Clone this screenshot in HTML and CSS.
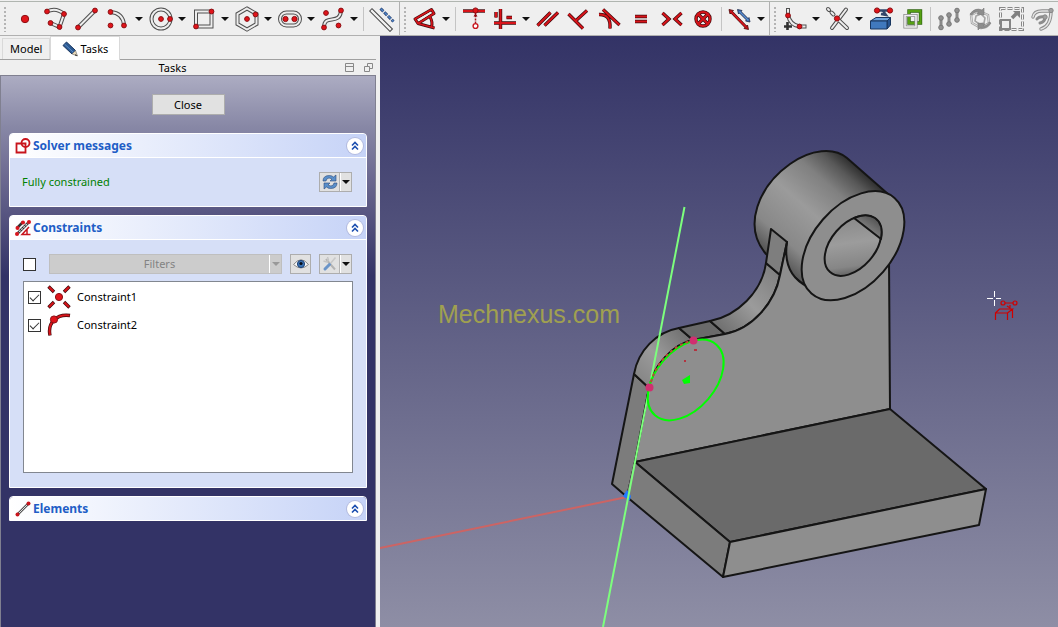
FILE: index.html
```html
<!DOCTYPE html>
<html lang="en">
<head>
<meta charset="utf-8">
<meta name="viewport" content="width=device-width, initial-scale=1">
<title>Sketcher</title>
<link rel="stylesheet" href="styles.css">
</head>
<body>
<div class="app">
  <header class="toolbars">
    <div class="toolbar" role="toolbar" aria-label="Sketcher geometries">
      <span class="grip"></span>
      <button class="tool" aria-label="Point"><svg viewBox="-13 -13 26 26"><circle class="dot" r="3.7"/></svg></button>
      <button class="tool" aria-label="Polyline"><svg viewBox="-13 -13 26 26"><path class="k" d="M-9-7.500Q0-12 8-5L3.500 8L-5.500 4"/><path class="w" d="M-9-7.500Q0-12 8-5L3.500 8L-5.500 4"/><circle class="dot" cx="-9" cy="-7.500" r="2.400"/><circle class="dot" cx="8" cy="-5" r="2.400"/><circle class="dot" cx="3.500" cy="8" r="2.400"/><circle class="dot" cx="-5.500" cy="4" r="2.400"/></svg></button>
      <button class="tool" aria-label="Line"><svg viewBox="-13 -13 26 26"><path class="k" d="M-9 8.500L8-8.500"/><path class="w" d="M-9 8.500L8-8.500"/><circle class="dot" cx="-9" cy="8.500" r="2.400"/><circle class="dot" cx="8" cy="-8.500" r="2.400"/></svg></button>
      <button class="tool" aria-label="Arc"><svg viewBox="-13 -13 26 26"><path class="k" d="M-7.500-7Q5-6 6 6"/><path class="w" d="M-7.500-7Q5-6 6 6"/><circle class="dot" cx="-7.500" cy="-7" r="2.400"/><circle class="dot" cx="6" cy="6.500" r="2.400"/><circle class="dot" cx="-7.500" cy="6.500" r="2.400"/></svg></button>
      <button class="drop" aria-label="More arcs"></button>
      <button class="tool" aria-label="Circle"><svg viewBox="-13 -13 26 26"><circle class="k" cx="0" r="9.500"/><circle class="w" cx="0" r="9.500"/><circle class="dot" cx="0" r="2.400"/><circle class="dot" cx="9" r="2.400"/></svg></button>
      <button class="drop" aria-label="More circles"></button>
      <button class="tool" aria-label="Rectangle"><svg viewBox="-13 -13 26 26"><path class="k" d="M-8-7.500H7.500V7.500H-8z"/><path class="w" d="M-8-7.500H7.500V7.500H-8z"/><circle class="dot" cx="7.500" cy="-7.500" r="2.400"/><circle class="dot" cx="-8" cy="7.500" r="2.400"/></svg></button>
      <button class="drop" aria-label="More rectangles"></button>
      <button class="tool" aria-label="Polygon"><svg viewBox="-13 -13 26 26"><path class="k" d="M0-10.500L9.500-5V5L0 10.500L-9.500 5V-5z"/><path class="w" d="M0-10.500L9.500-5V5L0 10.500L-9.500 5V-5z"/><circle class="dot" r="2.400"/><circle class="dot" cx="8.500" cy="-4.500" r="2.400"/></svg></button>
      <button class="drop" aria-label="More polygons"></button>
      <button class="tool" aria-label="Slot"><svg viewBox="-13 -13 26 26"><rect class="k" x="-10" y="-6.500" width="20" height="13" rx="6.500"/><rect class="w" x="-10" y="-6.500" width="20" height="13" rx="6.500"/><circle class="dot" cx="-4.500" r="2.600"/><circle class="dot" cx="4.500" r="2.600"/></svg></button>
      <button class="drop" aria-label="More slots"></button>
      <button class="tool" aria-label="B-spline"><svg viewBox="-13 -13 26 26"><path class="k" d="M-9 8.500C-9-6 7 7 8-8.500"/><path class="w" d="M-9 8.500C-9-6 7 7 8-8.500"/><circle class="dot" cx="-7" cy="-6" r="2.400"/><circle class="dot" cx="8" cy="-8.500" r="2.400"/><circle class="dot" cx="-9" cy="8.500" r="2.400"/><circle class="dot" cx="5.500" cy="6.500" r="2.400"/></svg></button>
      <button class="drop" aria-label="More curves"></button>
      <span class="sep"></span>
      <button class="tool" aria-label="Construction geometry"><svg viewBox="-13 -13 26 26"><path d="M-10-8L8 10" stroke="#444" stroke-width="4.400" stroke-linecap="square"/><path d="M-10-8L8 10" stroke="#f0f0f0" stroke-width="2.400" stroke-linecap="square"/><path d="M-1.500-10.500L11.500 2.500" fill="none" stroke="#26406e" stroke-width="3" stroke-dasharray="4 1.300"/><path d="M-1.200-10.200L11.500 2.500" fill="none" stroke="#5287cb" stroke-width="1.500" stroke-dasharray="3.500 1.800"/></svg></button>
    </div>
    <div class="toolbar" role="toolbar" aria-label="Sketcher constraints">
      <span class="grip"></span>
      <button class="tool" aria-label="Dimension angle"><svg viewBox="-13 -13 26 26"><g stroke-linejoin="round"><path d="M-10 0L6.500-9.500L9-5.500L-7 4.500zM-7 4.500L9.500 9M5-2Q8 3 6.500 8" fill="none" stroke="#3f0a0c" stroke-width="3"/><path d="M-10 0L6.500-9.500L9-5.500L-7 4.500zM-7 4.500L9.500 9M5-2Q8 3 6.500 8" fill="none" stroke="#d8141a" stroke-width="1.600"/><path d="M-7.500 0.500L5.500-7L6.500-6L-6 2z" fill="#efefef"/></g></svg></button>
      <button class="drop" aria-label="More dimensions"></button>
      <span class="sep"></span>
      <button class="tool" aria-label="Point on object"><svg viewBox="-13 -13 26 26"><path class="d" d="M-11-8H11"/><path class="r" d="M-11-8H11"/><path d="M1.500-7V5" fill="none" stroke="#a01018" stroke-width="1.500" stroke-dasharray="2 1.200"/><path d="M-.5-2.500h4L1.500-6z" fill="#900c14"/><circle class="dot" cx="1.500" cy="-8.500" r="2.600"/><circle cx="1.500" cy="7" r="2.400" fill="#fff" stroke="#c8141c" stroke-width="1.400"/></svg></button>
      <button class="tool" aria-label="Horizontal or vertical"><svg viewBox="-13 -13 26 26"><path class="d" d="M-4.500-10V10M-11 4H11M-9-7V-1.500M1.500-1.500H7"/><path class="r" d="M-4.500-10V10M-11 4H11M-9-7V-1.500M1.500-1.500H7"/></svg></button>
      <button class="drop" aria-label="More alignment constraints"></button>
      <button class="tool" aria-label="Parallel"><svg viewBox="-13 -13 26 26"><path class="d" d="M-10.500 6.500L2.500-6.500M-3.500 6.500L10-6.500"/><path class="r" d="M-10.500 6.500L2.500-6.500M-3.500 6.500L10-6.500"/></svg></button>
      <button class="tool" aria-label="Perpendicular"><svg viewBox="-13 -13 26 26"><path class="d" d="M-10.500-5L4 9.500M-3.500 2L8-8.500"/><path class="r" d="M-10.500-5L4 9.500M-3.500 2L8-8.500"/></svg></button>
      <button class="tool" aria-label="Tangent"><svg viewBox="-13 -13 26 26"><path class="d" d="M-7-9.500L9.500 6M-11-4.500Q1-5 0 9.500"/><path class="r" d="M-7-9.500L9.500 6M-11-4.500Q1-5 0 9.500"/></svg></button>
      <button class="tool" aria-label="Equal"><svg viewBox="-13 -13 26 26"><path class="d" d="M-6-2.500H6M-6 2.500H6"/><path class="r" d="M-6-2.500H6M-6 2.500H6"/></svg></button>
      <button class="tool" aria-label="Symmetric"><svg viewBox="-13 -13 26 26"><path class="d" d="M-9.500-6L-3 0L-9.500 6M9.500-6L3 0L9.500 6"/><path class="r" d="M-9.500-6L-3 0L-9.500 6M9.500-6L3 0L9.500 6"/></svg></button>
      <button class="tool" aria-label="Block"><svg viewBox="-13 -13 26 26"><path class="d" d="M-4.500-4.500L4.500 4.500M4.500-4.500L-4.500 4.500"/><circle class="d" r="7"/><circle class="r" r="7"/><path class="r" d="M-4.500-4.500L4.500 4.500M4.500-4.500L-4.500 4.500"/></svg></button>
      <span class="sep"></span>
      <button class="tool" aria-label="Toggle driving constraint"><svg viewBox="-13 -13 26 26"><path d="M-9-7.500L6.500 8.500" stroke="#3a0808" stroke-width="3"/><path d="M-11-9.500l4.500 1-3.500 3.500zM8.500 10.500l-4.500-1 3.500-3.500z" fill="#c8141c" stroke="#4a0808" stroke-width=".8"/><path d="M-8.500-7L6 8" stroke="#d2161e" stroke-width="1.800"/><path d="M-.5-7.500L8 1" stroke="#1c2b4d" stroke-width="2.800"/><path d="M-2.500-9.500l4.500 1-3.500 3.500zM10 3l-4.500-1L9-1.500z" fill="#3d6eb4" stroke="#1c2b4d" stroke-width=".8"/><path d="M-.5-7.500L8 1" stroke="#5a8fd4" stroke-width="1.600"/></svg></button>
      <button class="drop" aria-label="More toggles"></button>
    </div>
    <div class="toolbar" role="toolbar" aria-label="Sketcher tools">
      <span class="grip"></span>
      <button class="tool" aria-label="Fillet"><svg viewBox="-13 -13 26 26"><path d="M-11 7.500h8M-7.500 3v8" stroke="#333" stroke-width="2.600" fill="none"/><path class="k" d="M-7-11V-4Q-5 6 4.500 7.500H11.500"/><path class="w" d="M-7-10V-4Q-5 6 4.500 7.500H10.500"/><circle class="dot" cx="-7" cy="-3.500" r="2.400"/><circle class="dot" cx="4.500" cy="7.500" r="2.400"/></svg></button>
      <button class="drop" aria-label="More corner tools"></button>
      <button class="tool" aria-label="Trim"><svg viewBox="-13 -13 26 26"><path class="k" stroke-linecap="round" d="M8-9.500L-6 9M-1-.5L9 9M-10-10l1 1M-6.500-6.500l2 2"/><path class="w" stroke-linecap="round" d="M8-9.500L-6 9M-1-.5L9 9M-10-10l1 1M-6.500-6.500l2 2"/><circle class="dot" cx="-1" cy="-.5" r="2.600"/></svg></button>
      <button class="drop" aria-label="More edit tools"></button>
      <button class="tool" aria-label="External geometry"><svg viewBox="-13 -13 26 26"><path d="M-4-8.500H9M0-5L5-4L2-8" stroke="#33476b" stroke-width="2.400" fill="none"/><path d="M-10.500 2L-5-1.500H9.500L6 2z" fill="#6ea3dc" stroke="#18365f"/><path d="M6 2l3.500-3.500V6L6 10z" fill="#285590" stroke="#18365f"/><path d="M-10.500 2H6v8h-16.500z" fill="#4079bd" stroke="#18365f"/><circle class="dot" cx="-4" cy="-8.500" r="2.600"/><circle class="dot" cx="9" cy="-8.500" r="2.600"/></svg></button>
      <button class="tool" aria-label="Carbon copy"><svg viewBox="-13 -13 26 26"><path d="M-3-8H8.500V4H-3z" fill="none" stroke="#2f6410" stroke-width="3.400"/><path d="M-3-8H8.500V4H-3z" fill="none" stroke="#56a012" stroke-width="2"/><path d="M-7-3.500H4V8H-7z" fill="none" stroke="#888" stroke-width="3.200"/><path d="M-7-3.500H4V8H-7z" fill="none" stroke="#f2f2f2" stroke-width="1.600"/></svg></button>
      <span class="sep"></span>
      <button class="tool" aria-label="Rectangular array" disabled><svg viewBox="-13 -13 26 26"><path d="M-8-1V8.500M0-4V5M8-8.500V1" stroke="#8a8a8a" stroke-width="3"/><g fill="#919191" stroke="#777"><circle cx="-8" cy="-1" r="2.300"/><circle cx="-8" cy="8.500" r="2.300"/><circle cy="-4" r="2.300"/><circle cy="5" r="2.300"/><circle cx="8" cy="-8.500" r="2.300"/><circle cx="8" cy="1" r="2.300"/></g></svg></button>
      <button class="tool" aria-label="Rotate" disabled><svg viewBox="-13 -13 26 26"><path d="M-9-4L-1-8L8-4L9 4L1 9L-8 4z" fill="none" stroke="#a4a4a4" stroke-width="2.400"/><path d="M-9-4L-1-8L8-4L9 4L1 9L-8 4z" fill="none" stroke="#ddd"/><path d="M-4-3L1-5L5-1L4 4L-1 5L-5 2z" fill="none" stroke="#a4a4a4" stroke-width="1.600"/><path d="M-10-5Q-5-12 2-9L4-11L4-4L-3-5L-1-7Q-6-8-8-4zM11 4Q7 11 0 9L-2 11V4L5 5L3 7Q8 7 9 3z" fill="#8d8d8d" stroke="#7a7a7a" stroke-width=".6"/></svg></button>
      <button class="tool" aria-label="Scale" disabled><svg viewBox="-13 -13 26 26"><rect x="-10.500" y="-10.500" width="22" height="21" fill="none" stroke="#888" stroke-width="3" stroke-dasharray="5 2"/><rect x="-10.500" y="-10.500" width="22" height="21" fill="none" stroke="#f5f5f5" stroke-width="1" stroke-dasharray="5 2"/><rect x="-10" y="1" width="9" height="9" fill="#eee" stroke="#858585" stroke-width="2"/><path d="M1-1L6-6" stroke="#808080" stroke-width="3.500"/><path d="M2-8h7v7z" fill="#808080"/></svg></button>
      <button class="tool" aria-label="Offset" disabled><svg viewBox="-13 -13 26 26"><g fill="none" stroke-linecap="round"><path d="M-9-2Q-8-8 0-8H9Q9 7-1 10" stroke="#8c8c8c" stroke-width="3.400"/><path d="M-9-2Q-8-8 0-8H9Q9 7-1 10" stroke="#e4e4e4" stroke-width="1.500"/><path d="M-5 0Q-3-3 3-2Q3 3-2 4" stroke="#8c8c8c" stroke-width="3"/></g><circle cx="9" cy="-8.500" r="2.200" fill="#a0a0a0" stroke="#888"/><circle cx="3" cy="-2" r="2.200" fill="#a0a0a0" stroke="#888"/></svg></button>
    </div>
  </header>

  <div class="workspace">
    <aside class="combo">
      <nav class="tabs" role="tablist">
        <button class="tab" role="tab" aria-selected="false">Model</button>
        <button class="tab tab-active" role="tab" aria-selected="true"><svg class="pencil" viewBox="0 0 16 16"><path d="M1 4.500L4.500 1L13.500 9.500L10 13z" fill="#2c5a93" stroke="#16335c"/><path d="M2.500 3L11.500 11.500" stroke="#5b8cc6"/><path d="M13.500 9.500L15.500 15L10 13z" fill="#e8d8b8" stroke="#666" stroke-width=".6"/><path d="M13.500 13l2 2-2.500-.5z" fill="#222"/></svg>Tasks</button>
      </nav>
      <div class="dock-title">
        <h1 class="dock-name">Tasks</h1>
        <button class="dock-btn" aria-label="Collapse"><svg viewBox="0 0 9 9"><path d="M.5.5h8v8h-8zM.5 3.500h8" fill="none" stroke="#888"/></svg></button>
        <button class="dock-btn" aria-label="Float"><svg viewBox="0 0 9 9"><path d="M3.500 3.500v-3h5v5h-3M.5 3.500h5v5h-5z" fill="none" stroke="#888"/></svg></button>
      </div>
      <div class="tasks">
        <button class="close">Close</button>

        <section class="group">
          <header class="group-head">
            <svg class="group-icon" viewBox="0 0 16 16" fill="none" stroke="#c8141c" stroke-width="1.800"><path d="M1.500 5.500h9v9h-9z"/><circle cx="10.500" cy="5" r="4"/></svg>
            <h2 class="group-title">Solver messages</h2>
            <button class="fold" aria-label="Collapse solver messages"><svg viewBox="0 0 16 16"><path d="M5 7.500l3-3 3 3M5 11.500l3-3 3 3"/></svg></button>
          </header>
          <div class="group-body solver">
            <span class="status">Fully constrained</span>
            <button class="split" aria-label="Update"><span class="split-main"><svg viewBox="0 0 16 16"><path d="M1 7Q1 1.500 7.500 1.500Q10 1.500 11.500 3L14 1V7H8L10 5Q5 2.500 4 7zM15 9Q15 14.500 8.500 14.500Q6 14.500 4.500 13L2 15V9H8L6 11Q11 13.500 12 9z" fill="#5a8fca" stroke="#2b4c7c" stroke-width=".6"/></svg></span><span class="split-arrow"></span></button>
          </div>
        </section>

        <section class="group">
          <header class="group-head">
            <svg class="group-icon" viewBox="0 0 16 16"><path d="M2 8L8 2M2 14L14 2" stroke="#333" stroke-width="2.600"/><path d="M2 14L14 2" stroke="#ddd" stroke-width="1.200" stroke-dasharray="2 1"/><path d="M14 7L7 14.500H15.500M12 9.500v5" fill="none" stroke="#c8141c" stroke-width="1.500"/><g fill="#d8161e"><circle cx="2.500" cy="8" r="2"/><circle cx="8" cy="2.500" r="2"/><circle cx="2" cy="14" r="2"/><circle cx="14" cy="2" r="2"/></g></svg>
            <h2 class="group-title">Constraints</h2>
            <button class="fold" aria-label="Collapse constraints"><svg viewBox="0 0 16 16"><path d="M5 7.500l3-3 3 3M5 11.500l3-3 3 3"/></svg></button>
          </header>
          <div class="group-body constraints">
            <div class="filter-row">
              <input class="check" type="checkbox" aria-label="Enable filters">
              <div class="filter"><select class="filter-select" aria-label="Filters" disabled><option>Filters</option></select><span class="filter-arrow"></span></div>
              <button class="eye" aria-label="Show or hide"><svg viewBox="0 0 18 14"><path d="M1.500 7.500Q9-2 16.500 7.500Q9 14.500 1.500 7.500z" fill="#f5f5f5" stroke="#888"/><circle cx="9" cy="7" r="3.600" fill="#3b73b4" stroke="#1f4377"/><circle cx="9" cy="6.500" r="1.600" fill="#050b18"/></svg></button>
              <button class="split" aria-label="Settings"><span class="split-main"><svg viewBox="0 0 16 16"><path d="M4 3L6 5.500L13 13.500" fill="none" stroke="#b4b4b4" stroke-width="2"/><path d="M13.500 1.500L8 8" stroke="#c8c8c8" stroke-width="1.600"/><path d="M7.500 8.500L3 13" stroke="#6a94c8" stroke-width="3" stroke-linecap="round"/><path d="M1.500 5l3 1 2-2-1-3" fill="none" stroke="#c4c4c4" stroke-width="1.400"/></svg></span><span class="split-arrow"></span></button>
            </div>
            <ul class="list">
              <li><label class="item"><input class="check" type="checkbox" checked><svg class="item-icon" viewBox="0 0 24 24"><path class="d" d="M1.500 1.500l5.500 5.500M22.500 1.500l-5.500 5.500M1.500 22.500l5.500-5.500M22.500 22.500l-5.500-5.500"/><path class="r" d="M2 2l4.500 4.500M22 2l-4.500 4.500M2 22l4.500-4.500M22 22l-4.500-4.500"/><circle class="dot" cx="12" cy="12" r="3.600"/></svg>Constraint1</label></li>
              <li><label class="item"><input class="check" type="checkbox" checked><svg class="item-icon" viewBox="0 0 24 24"><path class="d" d="M3 22.500Q1 13 7 7T23 2.500"/><path class="r" d="M3 22Q1 13 7 7T22.500 2.500"/><circle class="dot" cx="7" cy="6.500" r="3.600"/></svg>Constraint2</label></li>
            </ul>
          </div>
        </section>

        <section class="group">
          <header class="group-head">
            <svg class="group-icon" viewBox="0 0 16 16"><path d="M2 14L14 2" stroke="#555" stroke-width="2.600"/><path d="M2 14L14 2" stroke="#ddd"/><circle cx="2.500" cy="13.500" r="2" fill="#c8141c"/><circle cx="13.500" cy="2.500" r="2" fill="#c8141c"/></svg>
            <h2 class="group-title">Elements</h2>
            <button class="fold" aria-label="Expand elements"><svg viewBox="0 0 16 16"><path d="M5 7.500l3-3 3 3M5 11.500l3-3 3 3"/></svg></button>
          </header>
        </section>
      </div>
    </aside>

    <main class="view">
      <svg class="scene" viewBox="380 36 678 591" preserveAspectRatio="xMinYMin slice" role="img" aria-label="Bearing bracket model">
        <defs>
          <linearGradient id="barrel" gradientUnits="userSpaceOnUse" x1="867" y1="176" x2="783" y2="272">
            <stop offset="0" stop-color="#303030"/><stop offset=".1" stop-color="#585858"/><stop offset=".25" stop-color="#808080"/><stop offset=".5" stop-color="#9b9b9b"/><stop offset=".8" stop-color="#888"/><stop offset="1" stop-color="#4c4c4c"/>
          </linearGradient>
          <linearGradient id="bore" gradientUnits="userSpaceOnUse" x1="874" y1="220" x2="830" y2="270">
            <stop offset="0" stop-color="#868686"/><stop offset=".45" stop-color="#9c9c9c"/><stop offset=".8" stop-color="#868686"/><stop offset="1" stop-color="#505050"/>
          </linearGradient>
          <linearGradient id="boreTop" gradientUnits="userSpaceOnUse" x1="876" y1="214" x2="866" y2="228">
            <stop offset="0" stop-color="#484848"/><stop offset="1" stop-color="#7c7c7c"/>
          </linearGradient>
          <linearGradient id="round" gradientUnits="userSpaceOnUse" x1="636" y1="380" x2="688" y2="334">
            <stop offset="0" stop-color="#848484"/><stop offset=".45" stop-color="#9b9b9b"/><stop offset="1" stop-color="#707070"/>
          </linearGradient>
          <linearGradient id="fillet" gradientUnits="userSpaceOnUse" x1="716" y1="330" x2="775" y2="270">
            <stop offset="0" stop-color="#6c6c6c"/><stop offset=".5" stop-color="#9b9b9b"/><stop offset="1" stop-color="#808080"/>
          </linearGradient>
        </defs>
        <text class="watermark" x="438" y="323">Mechnexus.com</text>
        <g class="solid">
          <path fill="url(#barrel)" d="M766 254C742 226 759 186 790 164C811 149 834 147 847 158L888 194L808 288z"/>
          <path fill="#7c7c7c" d="M612 484L634 374L649 388L635 462L627 497z"/>
          <path fill="url(#round)" d="M634 374C638 351 656 332 679 328L693 340C674 344 653 365 649 388z"/>
          <path fill="#6a6a6a" d="M679 328L710 321L725 334L693 340z"/>
          <path fill="url(#fillet)" d="M710 321C737 316 762 292 766 263L780 275C775 303 752 329 725 334z"/>
          <path fill="#7e7e7e" d="M766 263L771 229L787 242L780 275z"/>
          <path fill="#8e8e8e" d="M635 462L649 388C653 365 674 344 693 340L725 334C752 329 775 303 780 275L787 242C784 262 790 278 808 287L889 260L890 409z"/>
          <ellipse fill="#8e8e8e" cx="853" cy="245.700" rx="63.300" ry="39.900" transform="rotate(-49 853 245.700)"/>
          <ellipse fill="url(#bore)" cx="853" cy="245.700" rx="35" ry="22" transform="rotate(-49 853 245.700)"/>
          <path fill="url(#boreTop)" d="M854 218C870 211 885 218 881 239z"/>
          <path fill="#6a6a6a" d="M635 462L890 409L986 489L730 542z"/>
          <path fill="#7c7c7c" d="M635 462L730 542L723 577L627 497z"/>
          <path fill="#8e8e8e" d="M730 542L986 489L979 525L723 577z"/>
        </g>
        <path d="M635 464L628 495" stroke="#7c7c7c" stroke-width="3"/>
        <path class="axis-x" d="M380 548L627 497"/>
        <path d="M627 490l-4 6 2 2h3l-1 3 3-1 1-4-2-3z" fill="#2277ff"/>
        <path class="axis-y" d="M684.500 207L603 627"/>
        <ellipse class="sketch" cx="685.700" cy="380" rx="46.800" ry="29.500" transform="rotate(-49 685.700 380)"/>
        <path d="M651 382C656 362 674 345 691 341" fill="none" stroke="#b94a38" stroke-width="2" stroke-dasharray="3 3"/>
        <path d="M682 380l8-5v8l-6 1z" fill="#0f0"/>
        <path d="M694 349h3v2h-3zM684 360h2v2h-2z" fill="#b3333f"/>
        <circle cx="693.500" cy="340.500" r="4" fill="#d03070"/><circle cx="649.500" cy="387.500" r="4" fill="#d03070"/>
        <path d="M987 298.500h6M996 298.500h5M994.500 291v6M994.500 300v6" stroke="#fff" stroke-width="1"/>
        <g fill="none" stroke="#d00000" stroke-width="1.200"><circle cx="1003" cy="303" r="2"/><circle cx="1015" cy="303" r="2"/><path d="M1005 303h8M1007 306l3 2v-3M995.500 320v-7h12v7M995.500 313l4-4h13l-5 4M1012.500 309v9"/></g>
      </svg>
    </main>
  </div>
</div>
</body>
</html>
```
FILE: styles.css
```css
* { box-sizing: border-box; }

body {
  margin: 0;
  font: 11px/16px "Noto Sans", "Open Sans", sans-serif;
  color: #000;
}

button, select, input { font: inherit; color: inherit; margin: 0; }
button { padding: 0; border: 0; background: none; }
h1, h2, ul { margin: 0; padding: 0; font-size: inherit; list-style: none; }

.app { display: flex; flex-direction: column; height: 100vh; overflow: hidden; background: #efefef; }

/* Toolbars */
.toolbars {
  display: flex;
  flex: none;
  height: 36px;
  padding-top: 1px;
  border-bottom: 1px solid #b0b0b0;
  overflow: hidden;
}
.toolbar { display: flex; align-items: center; flex: none; border-top: 1px solid #b0b5b0; padding-right: 2px; border-right: 1px solid #b0b0b0; }
.toolbar:last-child { flex: 1 0 auto; border-right: 0; padding-right: 0; }
.grip {
  width: 9px;
  height: 26px;
  background: radial-gradient(circle, #b4b4b4 1px, transparent 1px) 3px 0 / 4px 4px repeat-y;
}
.tool { width: 31px; height: 32px; display: grid; place-items: center; }
.tool svg { width: 26px; height: 26px; display: block; }
.drop { width: 12px; height: 32px; display: grid; place-items: center; }
.drop::before, .split-arrow::before, .filter-arrow::before {
  content: "";
  border: 4px solid transparent;
  border-top-color: #111;
  border-bottom: 0;
}
.drop::before { border-width: 4px 4px 0; }
.sep { width: 6px; height: 24px; background: linear-gradient(#c4c4c4, #c4c4c4) center / 1px 100% no-repeat; }

.dot { fill: #e0141a; stroke: #8c1014; stroke-width: 1; }
.k { fill: none; stroke: #505050; stroke-width: 4; }
.w { fill: none; stroke: #eee; stroke-width: 2; }
.d { fill: none; stroke: #3f0a0c; stroke-width: 3.4; }
.r { fill: none; stroke: #d8141a; stroke-width: 2; }

/* Dock */
.workspace { display: flex; flex: 1; min-height: 0; }
.combo { display: flex; flex-direction: column; flex: none; width: 376px; margin-right: 4px; }
.tabs { display: flex; align-items: flex-end; height: 24px; padding-left: 2px; border-bottom: 1px solid #a0a0a0; }
.tab { height: 21px; padding: 0 7px; border: 1px solid #d9d9d9; border-bottom: 0; line-height: 20px; }
.tab-active { display: flex; align-items: center; gap: 2px; height: 24px; margin-bottom: -1px; padding: 0 11px; background: #fff; }
.pencil { width: 16px; height: 16px; }
.dock-title { display: flex; align-items: center; gap: 10px; height: 15px; padding-right: 3px; }
.dock-name { flex: 1; padding-left: 10px; text-align: center; font-weight: 400; }
.dock-btn { width: 9px; height: 9px; }
.dock-btn svg { display: block; width: 9px; height: 9px; }

.tasks {
  flex: 1;
  display: flex;
  flex-direction: column;
  gap: 8px;
  padding: 18px 8px 8px;
  border: 1px solid #808090;
  border-bottom: 0;
  background: #333366 linear-gradient(#acacc2, #8888a6 50px, #6d6a91 100px, #333366 200px);
}
.close { align-self: center; width: 73px; height: 21px; margin-bottom: 10px; border: 1px solid #adadad; background: #e1e1e1; }

.group { display: flex; flex-direction: column; border: 1px solid #fff; border-radius: 4px 4px 0 0; background: #d6dff7; overflow: hidden; flex: none; }
.group-head { display: flex; align-items: center; gap: 2px; height: 23px; padding: 0 3px 0 5px; background: linear-gradient(90deg, #fff, #c6d3f7); }
.group-icon { width: 16px; height: 16px; }
.group-title { flex: 1; color: #215dc6; font-weight: 700; font-size: 12px; }
.fold { width: 16px; height: 16px; border-radius: 8px; background: #fff; box-shadow: 0 0 0 1px #b3bbdf; }
.fold svg { display: block; width: 16px; height: 16px; fill: none; stroke: #1c4fb0; stroke-width: 1.6; }

.group-body { border-top: 1px solid #fff; padding: 14px 13px; }
.solver { display: flex; align-items: center; justify-content: space-between; padding: 14px 14px 14px 12px; }
.status { color: #008000; }
.split { display: flex; width: 33px; height: 20px; border: 1px solid #adadad; background: #e1e1e1; }
.split-main { width: 20px; display: grid; place-items: center; border-right: 1px solid #b4b4b4; }
.split-main svg { width: 16px; height: 16px; }
.split-arrow { flex: 1; display: grid; place-items: center; border-left: 1px solid #fff; }

.filter-row { display: flex; align-items: center; height: 20px; margin: 0 1px 7px 0; }
.check { appearance: none; flex: none; width: 13px; height: 13px; border: 1px solid #333; background: #fff; }
.check:checked { display: grid; place-items: center; }
.check:checked::before {
  content: "";
  width: 8px;
  height: 4px;
  margin-bottom: 2px;
  border: solid #333;
  border-width: 0 0 1px 1px;
  transform: rotate(-45deg);
}
.filter { display: flex; flex: 1; height: 20px; margin: 0 8px 0 13px; border: 1px solid #bfbfbf; background: #ccc; }
.filter-select { appearance: none; flex: 1; min-width: 0; padding: 0; border: 0; background: none; color: #838383; opacity: 1; text-align: center; text-align-last: center; }
.filter-arrow { width: 12px; display: grid; place-items: center; border-left: 1px solid #fff; }
.filter-arrow::before { border-top-color: #999; }
.eye { display: grid; place-items: center; width: 21px; height: 20px; margin-right: 8px; border: 1px solid #adadad; background: #e1e1e1; }
.eye svg { width: 18px; height: 14px; }

.list { height: 192px; padding: 1px 4px; border: 1px solid #828790; background: #fff; }
.item { display: flex; align-items: center; height: 28px; }
.item-icon { width: 24px; height: 24px; margin: 0 6px; }

/* 3D view */
.view { flex: 1; min-width: 0; background: linear-gradient(#333366, #8e8ea5); }
.scene { display: block; width: 100%; height: 100%; }
.watermark { font: 25px "Liberation Sans", Arial, sans-serif; fill: #a0a050; }
.solid { stroke: #151515; stroke-width: 2; stroke-linejoin: round; }
.axis-x { stroke: #cc6464; stroke-width: 2; }
.axis-y { stroke: #7dff7d; stroke-width: 2; }
.sketch { fill: none; stroke: #0f0; stroke-width: 2; }
```
